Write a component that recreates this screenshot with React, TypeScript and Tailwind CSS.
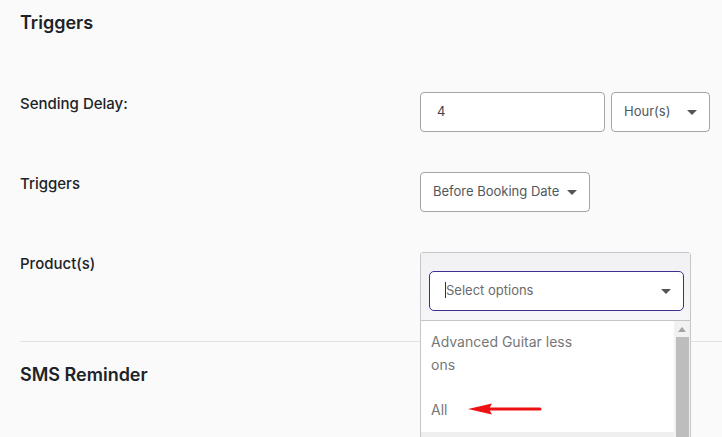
import React from "react";

function Caret({ className = "" }: { className?: string }) {
  return (
    <svg className={className} width="10" height="5" viewBox="0 0 10 5">
      <path d="M0 0 L10 0 L5 5 Z" fill="#555555" />
    </svg>
  );
}

export default function App() {
  return (
    <div className="h-[437px] w-full overflow-hidden bg-[#fafafa] font-['Inter',sans-serif] text-[#1d2327]">
      <div className="pl-5 pt-[9px]">
        <h2 className="text-[18px] font-semibold leading-[28px]">Triggers</h2>
        <div className="mt-[55px] flex flex-col gap-10">
          <div className="grid grid-cols-[400px_auto]">
            <div className="pt-[2px] text-[15px] font-medium leading-5">Sending Delay:</div>
            <div className="flex gap-[6px]">
              <div className="flex h-10 w-[185px] items-center rounded-[4px] border border-[#a2a5a9] bg-white pl-4 text-[13px] text-[#3c434a]">
                4
              </div>
              <div className="flex h-10 w-[99px] items-center justify-between rounded-[4px] border border-[#a2a5a9] bg-white pl-3 pr-3 text-[13px] text-[#50575e]">
                <span>Hour(s)</span>
                <Caret />
              </div>
            </div>
          </div>
          <div className="grid grid-cols-[400px_auto]">
            <div className="pt-[2px] text-[15px] font-medium leading-5">Triggers</div>
            <div className="flex">
              <div className="flex h-10 w-[170px] items-center justify-between rounded-[4px] border border-[#a2a5a9] bg-white pl-3 pr-3 text-[13px] text-[#50575e]">
                <span>Before Booking Date</span>
                <Caret />
              </div>
            </div>
          </div>
          <div className="grid h-10 grid-cols-[400px_auto]">
            <div className="pt-[2px] text-[15px] font-medium leading-5">Product(s)</div>
            <div className="relative z-10">
              <div className="absolute left-0 top-0 flex h-[200px] w-[271px] flex-col rounded-t-[3px] border border-[#c5c6c9] bg-white">
                <div className="border-b border-[#c5c6c9] bg-gradient-to-b from-[#f1f1f4] to-[#f6f6f8] pb-[9px] pl-2 pr-[6px] pt-[18px]">
                  <div className="flex h-10 w-[255px] items-center justify-between rounded-[5px] border border-[#3f2d8f] bg-white pl-4 pr-3 text-[13px] text-[#6b6b6b]">
                    <span className="relative">
                      <span className="absolute -left-[1px] top-[1px] h-[16px] w-px bg-[#333]" />
                      Select options
                    </span>
                    <Caret />
                  </div>
                </div>
                <div className="relative flex flex-1">
                  <div className="flex-1 text-[14px] leading-[23px] text-[#777777]">
                    <div className="pb-[10px] pl-[10px] pt-[9px]">
                      Advanced Guitar less
                      <br />
                      ons
                    </div>
                    <div className="py-[11.5px] pl-[10px]">All</div>
                    <div className="h-10 bg-[#efefef]" />
                  </div>
                  <div className="flex w-4 flex-col bg-[#f1f1f1]">
                    <div className="flex h-4 items-center justify-center">
                      <svg width="8" height="5" viewBox="0 0 8 5">
                        <path d="M0 5 L8 5 L4 0 Z" fill="#a3a3a3" />
                      </svg>
                    </div>
                    <div className="ml-[2px] mr-px flex-1 bg-[#bdbdbd]" />
                  </div>
                  <svg
                    className="absolute left-[47px] top-[81px]"
                    width="74"
                    height="14"
                    viewBox="0 0 74 14"
                  >
                    <path d="M0 7 L24 1.5 L21 7 L24 12.5 Z" fill="#ee1111" />
                    <path d="M20 7 L72 7" stroke="#ee1111" strokeWidth="3" strokeLinecap="round" />
                  </svg>
                </div>
              </div>
            </div>
          </div>
        </div>
      </div>
      <div className="ml-5 mt-[49px] border-t border-[#e2e2e2]" />
      <h2 className="pl-5 pt-[19px] text-[18px] font-semibold leading-[28px]">SMS Reminder</h2>
    </div>
  );
}
